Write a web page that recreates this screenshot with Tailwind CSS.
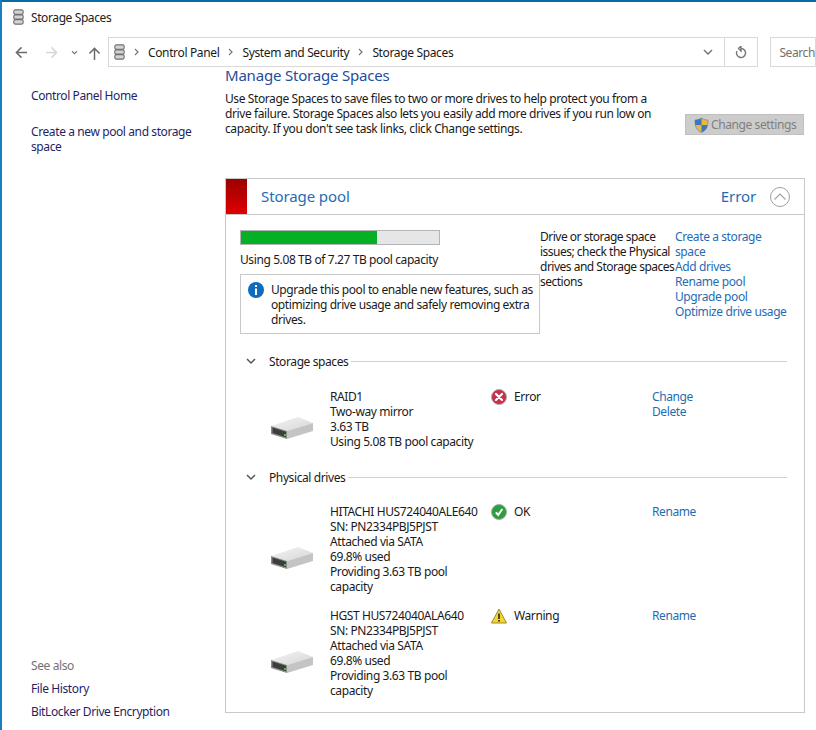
<!DOCTYPE html>
<html>
<head>
<meta charset="utf-8">
<script src="https://cdn.jsdelivr.net/npm/@tailwindcss/browser@4"></script>
</head>
<body class="bg-white">
<div class="w-[816px] h-[730px] overflow-hidden flex flex-col border-t-2 border-l-2 border-t-[#0a6aa8] border-l-[#1a7fc0] bg-white font-['Noto_Sans',sans-serif] text-[12px] leading-[15px] tracking-[-0.4px] text-[#1a1a1a]">
  <!-- title -->
  <div class="h-[35px] shrink-0 flex items-center gap-[7px] pl-[11px] pb-[5px]">
    <svg class="w-[11px] h-[16px]" viewBox="0 0 14 18" preserveAspectRatio="none"><g fill="#d4d4d4" stroke="#6e6e6e" stroke-width="1.4"><rect x="1" y="1" width="12" height="5" rx="2"/><rect x="1" y="6.500" width="12" height="5" rx="2"/><rect x="1" y="12" width="12" height="5" rx="2"/></g></svg>
    <span class="text-[#222]">Storage Spaces</span>
  </div>
  <!-- nav -->
  <div class="h-[30px] shrink-0 flex items-center">
    <div class="w-[106px] h-full flex items-center">
      <svg class="ml-[13px] w-[13px] h-[13px]" viewBox="0 0 14 14" fill="none" stroke="#6b6b6b" stroke-width="1.6"><path d="M13 7H1.500M7 1.500 1.500 7 7 12.500"/></svg>
      <svg class="ml-[17px] w-[13px] h-[13px]" viewBox="0 0 14 14" fill="none" stroke="#d6d6d6" stroke-width="1.6"><path d="M1 7h11.500M7 1.500 12.500 7 7 12.500"/></svg>
      <svg class="ml-[13px] w-[7px] h-[5px]" viewBox="0 0 8 6" fill="none" stroke="#777" stroke-width="1.3"><path d="M1 1.500 4 4.500 7 1.500"/></svg>
      <svg class="ml-[10px] mt-[2px] w-[13px] h-[13px]" viewBox="0 0 14 14" fill="none" stroke="#6b6b6b" stroke-width="1.6"><path d="M7 14V1.500M1.500 7 7 1.500 12.500 7"/></svg>
    </div>
    <div class="w-[651px] h-full border border-[#d9d9d9] flex items-center tracking-[-0.35px]">
      <svg class="ml-[5px] w-[11px] h-[16px]" viewBox="0 0 14 18" preserveAspectRatio="none"><g fill="#d4d4d4" stroke="#6e6e6e" stroke-width="1.4"><rect x="1" y="1" width="12" height="5" rx="2"/><rect x="1" y="6.500" width="12" height="5" rx="2"/><rect x="1" y="12" width="12" height="5" rx="2"/></g></svg>
      <svg class="ml-[9px] w-[5px] h-[8px]" viewBox="0 0 5 8" fill="none" stroke="#777" stroke-width="1.200"><path d="M1 1 4 4 1 7"/></svg>
      <span class="ml-[9px]">Control Panel</span>
      <svg class="ml-[9px] w-[5px] h-[8px]" viewBox="0 0 5 8" fill="none" stroke="#777" stroke-width="1.200"><path d="M1 1 4 4 1 7"/></svg>
      <span class="ml-[9px]">System and Security</span>
      <svg class="ml-[9px] w-[5px] h-[8px]" viewBox="0 0 5 8" fill="none" stroke="#777" stroke-width="1.200"><path d="M1 1 4 4 1 7"/></svg>
      <span class="ml-[9px]">Storage Spaces</span>
      <svg class="ml-auto mr-[11px] w-[10px] h-[6px]" viewBox="0 0 10 6" fill="none" stroke="#777" stroke-width="1.500"><path d="M1 1 5 5 9 1"/></svg>
      <div class="w-[33px] h-full border-l border-[#d9d9d9] flex items-center justify-center">
        <svg class="w-[12px] h-[13px]" viewBox="0 0 12 13" fill="none" stroke="#777" stroke-width="1.400"><path d="M6 2.500a4.500 4.500 0 1 1-4 2.500M6 0v5L3.500 2.500z"/></svg>
      </div>
    </div>
    <div class="ml-[12px] flex-1 h-full border border-[#d9d9d9] flex items-center pl-[8px] text-[#707070]">Search</div>
  </div>
  <!-- body -->
  <div class="flex-1 flex min-h-0">
    <!-- sidebar -->
    <div class="w-[223px] shrink-0 pl-[29px] pr-[20px] pt-[21px] pb-[11px] flex flex-col text-[#1f1f66]">
      <div>Control Panel Home</div>
      <div class="mt-[21px]">Create a new pool and storage space</div>
      <div class="mt-auto text-[#727272]">See also</div>
      <div class="mt-[8px]">File History</div>
      <div class="mt-[8px]">BitLocker Drive Encryption</div>
    </div>
    <!-- main -->
    <div class="flex-1 min-w-0 overflow-hidden pr-[11px]">
      <div class="mt-[4px] h-[15px] overflow-hidden">
        <h1 class="mt-[-7px] text-[15px] leading-[22px] font-normal tracking-[-0.2px] text-[#1e4f9c]">Manage Storage Spaces</h1>
      </div>
      <div class="flex mt-[5px]">
        <p class="w-[440px] shrink-0">Use Storage Spaces to save files to two or more drives to help protect you from a drive failure. Storage Spaces also lets you easily add more drives if you run low on capacity. If you don't see task links, click Change settings.</p>
        <div class="ml-[20px] mt-[23px] w-[119px] h-[21px] bg-[#cccccc] border border-[#c0c0c0] flex items-center pl-[8px] gap-[2px] text-[#7f7f7f] whitespace-nowrap">
          <svg class="w-[15px] h-[16px] shrink-0" viewBox="0 0 15 16"><path d="M7.500 1C9.500 2.500 11.500 3 14 3c0 6-1 10-6.500 12.500C2 13 1 9 1 3c2.500 0 4.500-.5 6.500-2z" fill="#e9b93c" stroke="#7a8ba0" stroke-width=".8"/><path d="M7.500 1.300V8H1.200C1.300 6.500 1 4.500 1 3c2.500 0 4.500-.5 6.500-1.700zM7.500 8H13.500C13 11.500 11 14 7.500 15.300z" fill="#3a78c0"/></svg>
          <span>Change settings</span>
        </div>
      </div>
      <!-- panel -->
      <div class="mt-[42px] w-[580px] h-[535px] border border-[#c9c9c9]">
        <div class="h-[36px] flex items-center border-b border-[#c9c9c9]">
          <div class="w-[21px] h-full bg-linear-to-b from-[#9c0000] to-[#e00000]"></div>
          <span class="ml-[14px] text-[15px] tracking-[-0.1px] text-[#1f6cb5]">Storage pool</span>
          <span class="ml-auto text-[15px] tracking-[-0.1px] text-[#1f6cb5]">Error</span>
          <svg class="ml-[14px] mr-[14px] w-[20px] h-[20px]" viewBox="0 0 20 20" fill="none" stroke="#a0a0a0" stroke-width="1"><circle cx="10" cy="10" r="9.500"/><path d="M4.500 12.500 10 7l5.500 5.500" stroke-width="1.100"/></svg>
        </div>
        <div class="pl-[14px] pr-[17px]">
          <div class="flex pt-[15px]">
            <div class="w-[300px] shrink-0">
              <div class="w-[200px] h-[15px] border border-[#b4b4b4] bg-[#e6e6e6]"><div class="h-full bg-[#06b025] w-[136px]"></div></div>
              <div class="mt-[7px]">Using 5.08 TB of 7.27 TB pool capacity</div>
              <div class="mt-[7px] h-[60px] border border-[#c9c9c9] flex pl-[7px] pr-[3px] pt-[7px]">
                <svg class="w-[16px] h-[16px] shrink-0" viewBox="0 0 16 16"><circle cx="8" cy="8" r="8" fill="#0f6cbd"/><rect x="7" y="3" width="2" height="2" fill="#fff"/><rect x="7" y="6.500" width="2" height="6.500" fill="#fff"/></svg>
                <p class="ml-[7px]">Upgrade this pool to enable new features, such as optimizing drive usage and safely removing extra drives.</p>
              </div>
            </div>
            <p class="w-[135px] shrink-0 -mt-[1px] tracking-[-0.5px]">Drive or storage space issues; check the Physical drives and Storage spaces sections</p>
            <div class="w-[113px] shrink-0 -mt-[1px] text-[#1f6cb5]">
              <div>Create a storage space</div><div>Add drives</div><div>Rename pool</div><div>Upgrade pool</div><div class="whitespace-nowrap">Optimize drive usage</div>
            </div>
          </div>

          <div class="mt-[20px] flex items-center">
            <svg class="ml-[6px] w-[10px] h-[7px]" viewBox="0 0 10 7" fill="none" stroke="#555" stroke-width="1.500"><path d="M1 1 5 5 9 1"/></svg>
            <span class="ml-[13px]">Storage spaces</span>
            <div class="ml-[3px] flex-1 border-t border-[#d0d0d0]"></div>
          </div>
          <div class="mt-[20px] grid grid-cols-[90px_161px_161px_1fr]">
            <svg class="self-center mt-[18px] ml-[30px] w-[44px] h-[24px]" viewBox="0 0 44 24"><defs><linearGradient id="a" x1="0" y1="0" x2="1" y2="1"><stop offset="0" stop-color="#f4f4f4"/><stop offset="1" stop-color="#d6d6d6"/></linearGradient></defs><path d="M1 10 28 1l15 6-26 8z" fill="url(#a)"/><path d="M17 15 43 7v8l-26 8z" fill="#c4c4c4"/><path d="M1 10l16 5v8L1 18z" fill="#8b8b8b"/><path d="M2.500 11.500 16 15.800v5.500L2.500 17z" fill="#3d3d3d"/><rect x="14" y="18" width="2" height="2" fill="#35c24a"/></svg>
            <div>RAID1<br>Two-way mirror<br>3.63 TB<br>Using 5.08 TB pool capacity</div>
            <div class="flex items-start gap-[7px]">
              <svg class="w-[16px] h-[16px] shrink-0" viewBox="0 0 16 16"><circle cx="8" cy="8" r="7.500" fill="#c8304a" stroke="#a9a9a9" stroke-width="1"/><path d="M5 5l6 6M11 5l-6 6" stroke="#fff" stroke-width="2.200" stroke-linecap="round"/></svg>
              <span>Error</span>
            </div>
            <div class="text-[#1f6cb5]">Change<br>Delete</div>
          </div>

          <div class="mt-[21px] flex items-center">
            <svg class="ml-[6px] w-[10px] h-[7px]" viewBox="0 0 10 7" fill="none" stroke="#555" stroke-width="1.500"><path d="M1 1 5 5 9 1"/></svg>
            <span class="ml-[13px]">Physical drives</span>
            <div class="ml-[3px] flex-1 border-t border-[#d0d0d0]"></div>
          </div>
          <div class="mt-[19px] grid grid-cols-[90px_161px_161px_1fr]">
            <svg class="self-center mt-[18px] ml-[30px] w-[44px] h-[24px]" viewBox="0 0 44 24"><path d="M1 10 28 1l15 6-26 8z" fill="url(#a)"/><path d="M17 15 43 7v8l-26 8z" fill="#c4c4c4"/><path d="M1 10l16 5v8L1 18z" fill="#8b8b8b"/><path d="M2.500 11.500 16 15.800v5.500L2.500 17z" fill="#3d3d3d"/><rect x="14" y="18" width="2" height="2" fill="#35c24a"/></svg>
            <div>HITACHI HUS724040ALE640<br>SN: PN2334PBJ5PJST<br>Attached via SATA<br>69.8% used<br>Providing 3.63 TB pool capacity</div>
            <div class="flex items-start gap-[7px]">
              <svg class="w-[16px] h-[16px] shrink-0" viewBox="0 0 16 16"><circle cx="8" cy="8" r="7.500" fill="#2f9e3f" stroke="#a9a9a9" stroke-width="1"/><path d="M4.800 8.300 7.200 11 11.300 5" fill="none" stroke="#fff" stroke-width="2"/></svg>
              <span>OK</span>
            </div>
            <div class="text-[#1f6cb5]">Rename</div>
          </div>
          <div class="mt-[14px] grid grid-cols-[90px_161px_161px_1fr]">
            <svg class="self-center mt-[18px] ml-[30px] w-[44px] h-[24px]" viewBox="0 0 44 24"><path d="M1 10 28 1l15 6-26 8z" fill="url(#a)"/><path d="M17 15 43 7v8l-26 8z" fill="#c4c4c4"/><path d="M1 10l16 5v8L1 18z" fill="#8b8b8b"/><path d="M2.500 11.500 16 15.800v5.500L2.500 17z" fill="#3d3d3d"/><rect x="14" y="18" width="2" height="2" fill="#35c24a"/></svg>
            <div>HGST HUS724040ALA640<br>SN: PN2334PBJ5PJST<br>Attached via SATA<br>69.8% used<br>Providing 3.63 TB pool capacity</div>
            <div class="flex items-start gap-[7px]">
              <svg class="w-[16px] h-[16px] shrink-0" viewBox="0 0 16 16"><path d="M8 1 15.500 15H.5z" fill="#f7d52a" stroke="#9a8a3a" stroke-width="1" stroke-linejoin="round"/><rect x="7.200" y="5.500" width="1.600" height="5.500" fill="#222"/><rect x="7.200" y="12" width="1.600" height="1.600" fill="#222"/></svg>
              <span>Warning</span>
            </div>
            <div class="text-[#1f6cb5]">Rename</div>
          </div>
        </div>
      </div>
    </div>
  </div>
</div>
</body>
</html>
